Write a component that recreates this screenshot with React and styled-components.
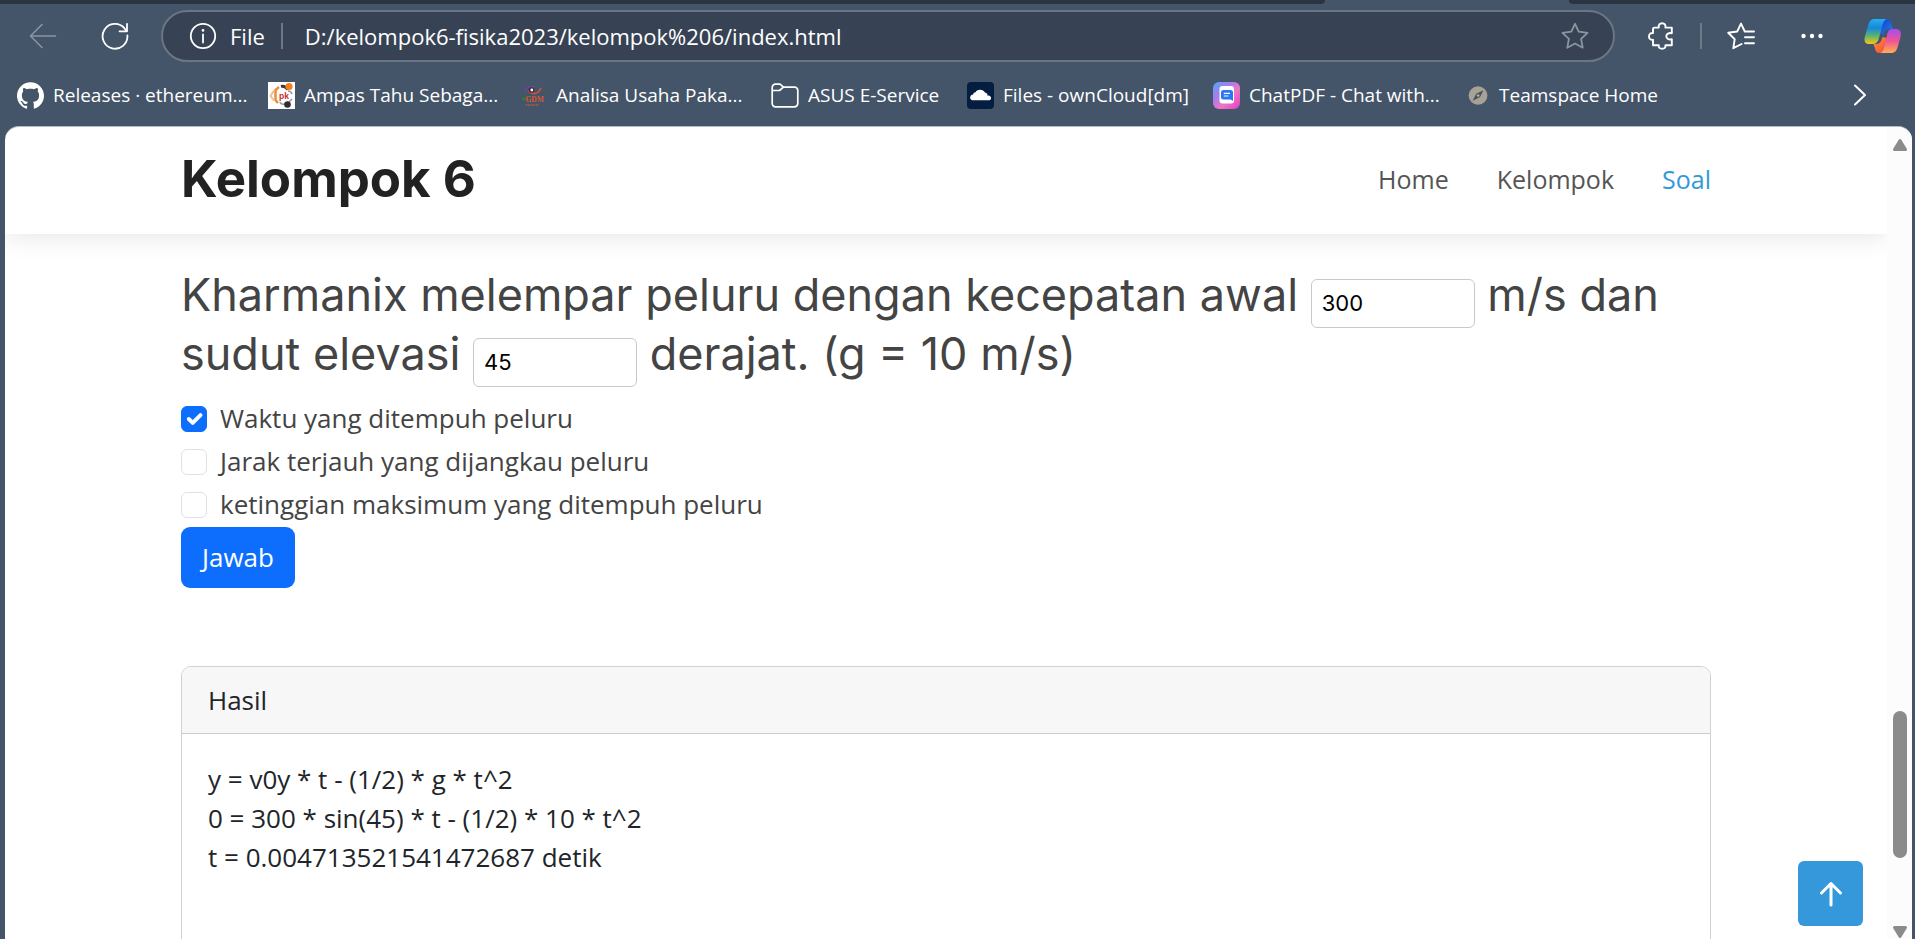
import React, { useState } from 'react';
import styled, { createGlobalStyle } from 'styled-components';

const GlobalStyle = createGlobalStyle`
  *, *::before, *::after { box-sizing: border-box; }
  html, body { margin: 0; height: 100%; }
  #root { height: 100%; }
  body { overflow: hidden; background: #445469; font-family: 'Open Sans', 'Noto Sans', sans-serif; }
  button, input { font: inherit; margin: 0; }
`;

/* ---------- browser frame ---------- */

const Browser = styled.div`
  height: 100vh;
  display: flex;
  flex-direction: column;
  background: #445469;
  color: #fff;
`;

const TabStrip = styled.div`
  flex: none;
  height: 4px;
  display: flex;
  background: #445469;
`;

const TabStripPart = styled.div`
  flex: ${(p) => p.$grow} 1 0;
  background: #2b3542;
  border-radius: ${(p) => (p.$left ? '0 0 8px 0' : '0 0 0 8px')};
`;

const ActiveTab = styled.div`
  flex: 0 0 244px;
`;

const Toolbar = styled.div`
  flex: none;
  display: flex;
  align-items: center;
  gap: 20px;
  padding: 6px 6px 4px 17px;
`;

const ToolGroup = styled.div`
  display: flex;
  align-items: center;
  gap: ${(p) => p.$gap}px;
`;

const IconButton = styled.button`
  width: ${(p) => p.$width || 52}px;
  height: 44px;
  display: flex;
  align-items: center;
  justify-content: center;
  padding: 0;
  border: 0;
  background: none;
  color: ${(p) => (p.$dim ? '#8b95a1' : '#fff')};
`;

const AddressBar = styled.div`
  flex: 1;
  min-width: 0;
  height: 52px;
  display: flex;
  align-items: center;
  border: 2px solid #6b7684;
  border-radius: 26px;
  background: #374354;
  padding: 0 12px 0 26px;
  font-size: 22px;
`;

const SchemeLabel = styled.span`
  margin: 0 16px 0 13px;
`;

const Divider = styled.span`
  flex: none;
  width: 2px;
  height: 26px;
  background: #6f7986;
`;

const UrlInput = styled.input`
  flex: 1;
  min-width: 0;
  margin-left: 22px;
  padding: 0;
  border: 0;
  outline: 0;
  background: none;
  color: #fff;
`;

const BookmarkBar = styled.nav`
  flex: none;
  height: 60px;
  display: flex;
  align-items: center;
  padding: 0 42px 2px 17px;
`;

const Bookmark = styled.a`
  flex: none;
  width: ${(p) => p.$width}px;
  display: flex;
  align-items: center;
  gap: 9px;
  color: #fff;
  font-size: 19px;
  line-height: 28px;
  white-space: nowrap;
  text-decoration: none;
`;

const BookmarkSpacer = styled.span`
  flex: 1;
`;

/* ---------- page ---------- */

const Viewport = styled.div`
  position: relative;
  flex: 1;
  min-height: 0;
  display: flex;
  margin: 0 3px 0 5px;
  overflow: hidden;
  border-top: 1px solid #b4bac3;
  border-radius: 14px 14px 0 0;
  background: #fff;
  color: #444;
`;

const Page = styled.div`
  position: relative;
  flex: 1;
  min-width: 0;
  overflow: hidden;
`;

const Container = styled.div`
  max-width: 1530px;
  margin: 0 auto;
`;

const Header = styled.header`
  box-shadow: 0 3px 24px rgba(0, 0, 0, 0.1);
`;

const HeaderRow = styled(Container)`
  height: 107px;
  display: flex;
  align-items: center;
  justify-content: space-between;
  padding-bottom: 4px;
`;

const Logo = styled.h1`
  margin: 0;
  color: #222;
  font: 700 51px/60px Inter, sans-serif;
`;

const Nav = styled.nav`
  display: flex;
  gap: 48px;
`;

const NavLink = styled.a`
  color: ${(p) => (p.$active ? '#3498db' : '#555')};
  font-size: 25px;
  line-height: 34px;
  text-decoration: none;
`;

const Main = styled(Container).attrs({ as: 'main' })`
  padding-top: 31px;
`;

const Question = styled.h2`
  margin: 0 0 16px;
  color: #444;
  font: 400 45px/59px Inter, sans-serif;
`;

/* The negative vertical margin keeps the fields from stretching the heading's line boxes. */
const NumberField = styled.input`
  width: 164px;
  height: 49px;
  margin: -6px 0;
  padding: 0 10px;
  border: 1px solid #c9c9c9;
  border-radius: 6px;
  background: #fff;
  color: #000;
  font: 400 22px/32px Inter, sans-serif;
`;

const Options = styled.div`
  display: flex;
  flex-direction: column;
  gap: 4px;
  margin-bottom: 3px;
`;

const Option = styled.label`
  display: flex;
  align-items: center;
  gap: 13px;
  font-size: 26px;
  line-height: 39px;
`;

const TickFrame = styled.span`
  display: grid;
  width: 26px;
  height: 26px;
  & > * { grid-area: 1 / 1; }
  & > svg { visibility: hidden; pointer-events: none; z-index: 1; }
  & > input:checked + svg { visibility: visible; }
`;

const Tick = styled.input`
  appearance: none;
  width: 26px;
  height: 26px;
  border: 1px solid #dee2e6;
  border-radius: 6px;
  background: #fff;
  &:checked { border-color: #0d6efd; background: #0d6efd; }
`;

const AnswerButton = styled.button`
  height: 61px;
  padding: 0 21px;
  border: 0;
  border-radius: 9px;
  background: #0d6efd;
  color: #fff;
  font-size: 26px;
  line-height: 39px;
`;

const Card = styled.section`
  min-height: 420px;
  margin-top: 78px;
  border: 1px solid #d0d1d2;
  border-radius: 10px;
  overflow: hidden;
  color: #212529;
  font-size: 26px;
  line-height: 39px;
`;

const CardHeader = styled.div`
  padding: 14px 26px 13px;
  border-bottom: 1px solid #cccdce;
  background: #f7f7f7;
`;

const CardBody = styled.div`
  padding: 26px;
`;

const ResultLine = styled.div``;

const ScrollTrack = styled.div`
  flex: none;
  width: 25px;
  display: flex;
  flex-direction: column;
  align-items: center;
  justify-content: space-between;
  padding: 11px 0 0;
  background: #fcfcfc;
`;

const ScrollSpace = styled.span`
  flex: ${(p) => p.$grow} 1 0;
`;

const ScrollThumb = styled.span`
  flex: 146 1 0;
  width: 14px;
  border-radius: 7px;
  background: #8b8b8b;
`;

const BackToTop = styled.a`
  position: absolute;
  right: 49px;
  bottom: 13px;
  width: 65px;
  height: 65px;
  display: flex;
  align-items: center;
  justify-content: center;
  border-radius: 6px;
  background: #3498db;
`;

/* ---------- icons ---------- */

const Line = ({ size = 28, width = 2, children, ...rest }) => (
  <svg width={size} height={size} viewBox="0 0 28 28" fill="none" stroke="currentColor" strokeWidth={width} strokeLinecap="round" strokeLinejoin="round" aria-hidden="true" {...rest}>
    {children}
  </svg>
);

const BackIcon = () => <Line width={1.6}><path d="M26.5 14H1.5M13 2.5 1.5 14 13 25.5" /></Line>;
const ReloadIcon = () => <Line width={1.8}><path d="M26.4 13.5A12.4 12.4 0 1 1 23.4 6.2L25.5 9M26 1.8V9.3H18.5" /></Line>;
const InfoIcon = () => (
  <Line width={1.8}><circle cx="14" cy="14" r="12.2" /><path d="M14 12.4V20.5" /><circle cx="14" cy="8.4" r="1.3" fill="currentColor" stroke="none" /></Line>
);
const StarIcon = () => <Line width={1.8}><path d="M14 1.8 17.7 9.6 26.5 10.8 20.1 16.9 21.7 25.7 14 21.5 6.3 25.7 7.9 16.9 1.5 10.8 10.3 9.6Z" /></Line>;
const PuzzleIcon = () => (
  <Line width={1.9}><path d="M7.500 5.600H11.800C11.300 2.800 12.600 1.200 15.100 1.200S18.900 2.800 18.400 5.600H24.800V11.200C21.800 10.500 19.300 11.900 19.300 14.300S21.800 18 24.800 17.300V23.300H18.400C18.900 25.600 17.400 26.800 15.100 26.800S11.300 25.600 11.800 23.300H6V17.800C3.600 18.200 2 16.800 2 14.400S3.600 10.700 6 11.100V7.100A1.500 1.500 0 0 1 7.500 5.600Z" /></Line>
);
const FavoritesIcon = () => (
  <Line width={1.9}><path d="M14.6 22 6.3 26.2 7.7 17.2 1.2 10.8 10.2 9.5 14 1.6 17.8 9.5H27M18 15.3H27M18 21.2H27" /></Line>
);
const DotsIcon = () => (
  <svg width="26" height="8" viewBox="0 0 26 8" fill="#fff" aria-hidden="true"><circle cx="4.5" cy="4" r="2.2" /><circle cx="13" cy="4" r="2.2" /><circle cx="21.5" cy="4" r="2.2" /></svg>
);
const ChevronIcon = () => (
  <svg width="14" height="22" viewBox="0 0 14 22" fill="none" stroke="#fff" strokeWidth="2" strokeLinecap="round" strokeLinejoin="round" aria-hidden="true"><path d="M2 1.5 12 11 2 20.5" /></svg>
);
const CopilotIcon = () => (
  <svg width="38" height="36" viewBox="0 0 38 36" aria-hidden="true">
    <defs>
      <linearGradient id="cpA" x1="0" y1="0" x2="0" y2="1"><stop offset="0" stopColor="#27aef0" /><stop offset=".35" stopColor="#1488dd" /><stop offset=".65" stopColor="#55b077" /><stop offset="1" stopColor="#f5c914" /></linearGradient>
      <linearGradient id="cpB" x1="0" y1="0" x2="0" y2="1"><stop offset="0" stopColor="#a44df2" /><stop offset=".5" stopColor="#ef5495" /><stop offset="1" stopColor="#ffb04d" /></linearGradient>
      <linearGradient id="cpC" x1="0" y1="0" x2="1" y2="1"><stop offset="0" stopColor="#123dcf" /><stop offset="1" stopColor="#2381e8" /></linearGradient>
      <linearGradient id="cpD" x1="0" y1="0" x2="1" y2="1"><stop offset="0" stopColor="#ff9a3c" /><stop offset="1" stopColor="#f0443a" /></linearGradient>
    </defs>
    <path d="M17 1H22.500C26 1 27 4 28 8L29 11H25.500C22 11 20.500 13 19.500 17L15 15Z" fill="url(#cpC)" />
    <path d="M20 35H15.500C12 35 11.500 32 10.500 29L9.500 26H12.500C16 26 17.500 23 18.500 19L23 20Z" fill="url(#cpD)" />
    <path d="M10.500 1H23.500C20.500 1 19.500 4 18.500 7L15 20C14 24 12 26 8.500 26H4.500C.5 26 0 22 1 18L4 8C5.500 3 7 1 10.500 1Z" fill="url(#cpA)" />
    <path d="M28.500 11H32.500C36.500 11 37.500 15 36.500 19L34 28C32.500 33 31 35 27 35H16C18.500 35 19.500 32 20.500 28L23 17C24 13 25 11 28.500 11Z" fill="url(#cpB)" />
  </svg>
);
const GithubIcon = () => (
  <svg width="27" height="27" viewBox="0 0 24 24" fill="#fff" aria-hidden="true"><path d="M12 .297c-6.63 0-12 5.373-12 12 0 5.303 3.438 9.8 8.205 11.385.6.113.82-.258.82-.577 0-.285-.01-1.04-.015-2.04-3.338.724-4.042-1.61-4.042-1.61C4.422 18.07 3.633 17.7 3.633 17.7c-1.087-.744.084-.729.084-.729 1.205.084 1.838 1.236 1.838 1.236 1.07 1.835 2.809 1.305 3.495.998.108-.776.417-1.305.76-1.605-2.665-.3-5.466-1.332-5.466-5.93 0-1.31.465-2.38 1.235-3.22-.135-.303-.54-1.523.105-3.176 0 0 1.005-.322 3.3 1.23.96-.267 1.98-.399 3-.405 1.02.006 2.04.138 3 .405 2.28-1.552 3.285-1.23 3.285-1.23.645 1.653.24 2.873.12 3.176.765.84 1.23 1.91 1.23 3.22 0 4.61-2.805 5.625-5.475 5.92.42.36.81 1.096.81 2.22 0 1.606-.015 2.896-.015 3.286 0 .315.21.69.825.57C20.565 22.092 24 17.592 24 12.297c0-6.627-5.373-12-12-12" /></svg>
);
const PkIcon = () => (
  <svg width="27" height="27" viewBox="0 0 27 27" aria-hidden="true">
    <rect width="27" height="27" fill="#fff" />
    <path d="M11 5 7.500 8V18L10 21" fill="none" stroke="#f08a3c" strokeWidth="2.500" />
    <path d="M6 8.500 2.500 14 6 18.500" fill="none" stroke="#f3bd92" strokeWidth="2" />
    <path d="M13 4.500Q17 3.500 20 7.500" fill="none" stroke="#3b3b3b" strokeWidth="3" />
    <circle cx="21" cy="4.500" r="3.600" fill="#f2811d" />
    <path d="M20 9Q23 9 24 12M12 20Q13 23 17 22M24 17 21 20" fill="none" stroke="#999" strokeWidth="1.500" />
    <circle cx="19.500" cy="22.500" r="3.300" fill="#2e2e2e" />
    <text x="11" y="16.500" fontFamily="Liberation Sans" fontSize="8.500" fontWeight="700" fill="#c4302b">pk</text>
  </svg>
);
const GdmIcon = () => (
  <svg width="27" height="27" viewBox="0 0 27 27" aria-hidden="true">
    <path d="M4 9Q9 3 14 5" fill="none" stroke="#74449c" strokeWidth="1.500" />
    <path d="M8 9Q14 14 19 9.500L21 6" fill="none" stroke="#d8522e" strokeWidth="1.600" />
    <circle cx="11.500" cy="8" r="2.800" fill="#3b2a45" /><circle cx="11.800" cy="8" r="1.400" fill="#fff" />
    <circle cx="4" cy="17" r="2" fill="#347a37" />
    <text x="5.500" y="20" fontFamily="Liberation Serif" fontSize="7.500" fontWeight="700" fill="#dd5631">GDM</text>
    <path d="M5.500 23H19" stroke="#b5533f" strokeWidth="1.500" strokeDasharray="2 .6" />
  </svg>
);
const FolderIcon = () => (
  <svg width="28" height="27" viewBox="0 0 28 27" fill="none" stroke="#fff" strokeWidth="1.700" strokeLinejoin="round" aria-hidden="true">
    <path d="M1.200 8V5.500A3.300 3.300 0 0 1 4.500 2.200H9L12.500 5.200H23.500A3.300 3.300 0 0 1 26.800 8.500V21.500A3.300 3.300 0 0 1 23.500 24.800H4.500A3.300 3.300 0 0 1 1.200 21.500ZM1.200 8.500H8.500L12.500 5.200" />
  </svg>
);
const CloudIcon = () => (
  <svg width="27" height="27" viewBox="0 0 27 27" aria-hidden="true">
    <rect width="27" height="27" rx="4" fill="#041e42" />
    <path d="M5 18.200A3 3 0 0 1 6 12.400 2.800 2.800 0 0 1 8.500 10.300 5.500 5.500 0 0 1 18 10.500 3.200 3.200 0 0 1 20.600 13.700 2.400 2.400 0 0 1 22.500 18.200Z" fill="#fff" />
  </svg>
);
const ChatPdfIcon = () => (
  <svg width="27" height="27" viewBox="0 0 27 27" aria-hidden="true">
    <defs><linearGradient id="pdfG" x1="0" y1="0" x2="1" y2="1"><stop offset="0" stopColor="#4fa6fb" /><stop offset=".35" stopColor="#a97ceb" /><stop offset=".6" stopColor="#ee77c5" /><stop offset="1" stopColor="#e33cc6" /></linearGradient></defs>
    <rect width="27" height="27" rx="6" fill="url(#pdfG)" />
    <rect x="6.500" y="4" width="14.500" height="17.500" rx="3" fill="#fff" />
    <path d="M10.500 8H17.500A2.500 2.500 0 0 1 20 10.500V19L17.500 17.500H10.500A2.500 2.500 0 0 1 8 15V10.500A2.500 2.500 0 0 1 10.500 8Z" fill="#2a76f5" />
    <path d="M10.800 11.300H17M10.800 14H15.500" stroke="#fff" strokeWidth="1.200" />
  </svg>
);
const CompassIcon = () => (
  <svg width="27" height="27" viewBox="0 0 27 27" aria-hidden="true">
    <circle cx="13.500" cy="13.500" r="10.500" fill="#a8a196" />
    <path d="M19.500 7.500 15.800 15.300 7.500 19.500 11.500 11.500Z" fill="#47515e" /><circle cx="13.600" cy="13.500" r="1.500" fill="#b5aea2" />
  </svg>
);
const ArrowUpIcon = () => (
  <svg width="24" height="26" viewBox="0 0 24 26" fill="none" stroke="#fff" strokeWidth="3" strokeLinecap="round" strokeLinejoin="round" aria-hidden="true"><path d="M12 24V2.500M2.500 12 12 2.500 21.500 12" /></svg>
);
const CheckIcon = () => (
  <svg width="26" height="26" viewBox="0 0 20 20" fill="none" stroke="#fff" strokeWidth="3" strokeLinecap="round" strokeLinejoin="round" aria-hidden="true"><path d="m6 10 3 3 6-6" /></svg>
);
const ScrollArrow = ({ down }) => (
  <svg width="16" height="14" viewBox="0 0 16 14" aria-hidden="true"><path d={down ? 'M2.500 2.500H13.500L8 11.500Z' : 'M2.500 11.500H13.500L8 2.500Z'} fill="#8b8b8b" stroke="#8b8b8b" strokeWidth="3" strokeLinejoin="round" /></svg>
);

/* ---------- content ---------- */

const bookmarks = [
  { label: 'Releases · ethereum...', width: 251, Icon: GithubIcon },
  { label: 'Ampas Tahu Sebaga...', width: 252, Icon: PkIcon },
  { label: 'Analisa Usaha Paka...', width: 251, Icon: GdmIcon },
  { label: 'ASUS E-Service', width: 196, Icon: FolderIcon },
  { label: 'Files - ownCloud[dm]', width: 246, Icon: CloudIcon },
  { label: 'ChatPDF - Chat with...', width: 253, Icon: ChatPdfIcon },
  { label: 'Teamspace Home', width: 192, Icon: CompassIcon },
];

const options = [
  'Waktu yang ditempuh peluru',
  'Jarak terjauh yang dijangkau peluru',
  'ketinggian maksimum yang ditempuh peluru',
];

const results = [
  'y = v0y * t - (1/2) * g * t^2',
  '0 = 300 * sin(45) * t - (1/2) * 10 * t^2',
  't = 0.004713521541472687 detik',
];

export default function App() {
  const [speed, setSpeed] = useState('300');
  const [angle, setAngle] = useState('45');
  return (
    <Browser>
      <GlobalStyle />
      <TabStrip>
        <TabStripPart $grow={1325} $left />
        <ActiveTab />
        <TabStripPart $grow={346} />
      </TabStrip>
      <Toolbar>
        <IconButton $dim aria-label="Back"><BackIcon /></IconButton>
        <IconButton aria-label="Refresh"><ReloadIcon /></IconButton>
        <AddressBar>
          <InfoIcon />
          <SchemeLabel>File</SchemeLabel>
          <Divider />
          <UrlInput aria-label="Address" defaultValue="D:/kelompok6-fisika2023/kelompok%206/index.html" />
          <IconButton $dim aria-label="Add to favorites"><StarIcon /></IconButton>
        </AddressBar>
        <ToolGroup $gap={19}>
          <ToolGroup $gap={13}>
            <IconButton aria-label="Extensions"><PuzzleIcon /></IconButton>
            <Divider />
            <IconButton aria-label="Favorites"><FavoritesIcon /></IconButton>
          </ToolGroup>
          <IconButton aria-label="Settings and more"><DotsIcon /></IconButton>
          <IconButton aria-label="Copilot"><CopilotIcon /></IconButton>
        </ToolGroup>
      </Toolbar>
      <BookmarkBar aria-label="Bookmarks">
        {bookmarks.map(({ label, width, Icon }) => (
          <Bookmark key={label} href="#" $width={width}><Icon />{label}</Bookmark>
        ))}
        <BookmarkSpacer />
        <IconButton $width={26} aria-label="More bookmarks"><ChevronIcon /></IconButton>
      </BookmarkBar>

      <Viewport>
        <Page>
          <Header>
            <HeaderRow>
              <Logo>Kelompok 6</Logo>
              <Nav>
                <NavLink href="#home">Home</NavLink>
                <NavLink href="#kelompok">Kelompok</NavLink>
                <NavLink href="#soal" $active>Soal</NavLink>
              </Nav>
            </HeaderRow>
          </Header>
          <Main>
            <Question>
              Kharmanix melempar peluru dengan kecepatan awal{' '}
              <NumberField aria-label="Kecepatan awal" value={speed} onChange={(e) => setSpeed(e.target.value)} />{' '}
              m/s dan sudut elevasi{' '}
              <NumberField aria-label="Sudut elevasi" value={angle} onChange={(e) => setAngle(e.target.value)} />{' '}
              derajat. (g = 10 m/s)
            </Question>
            <Options>
              {options.map((text, i) => (
                <Option key={text}>
                  <TickFrame>
                    <Tick type="checkbox" defaultChecked={i === 0} />
                    <CheckIcon />
                  </TickFrame>
                  {text}
                </Option>
              ))}
            </Options>
            <AnswerButton type="button">Jawab</AnswerButton>
            <Card>
              <CardHeader>Hasil</CardHeader>
              <CardBody>
                {results.map((line) => <ResultLine key={line}>{line}</ResultLine>)}
              </CardBody>
            </Card>
          </Main>
        </Page>
        <ScrollTrack aria-hidden="true">
          <ScrollArrow />
          <ScrollSpace $grow={558} />
          <ScrollThumb />
          <ScrollSpace $grow={67} />
          <ScrollArrow down />
        </ScrollTrack>
        <BackToTop href="#" aria-label="Kembali ke atas"><ArrowUpIcon /></BackToTop>
      </Viewport>
    </Browser>
  );
}
